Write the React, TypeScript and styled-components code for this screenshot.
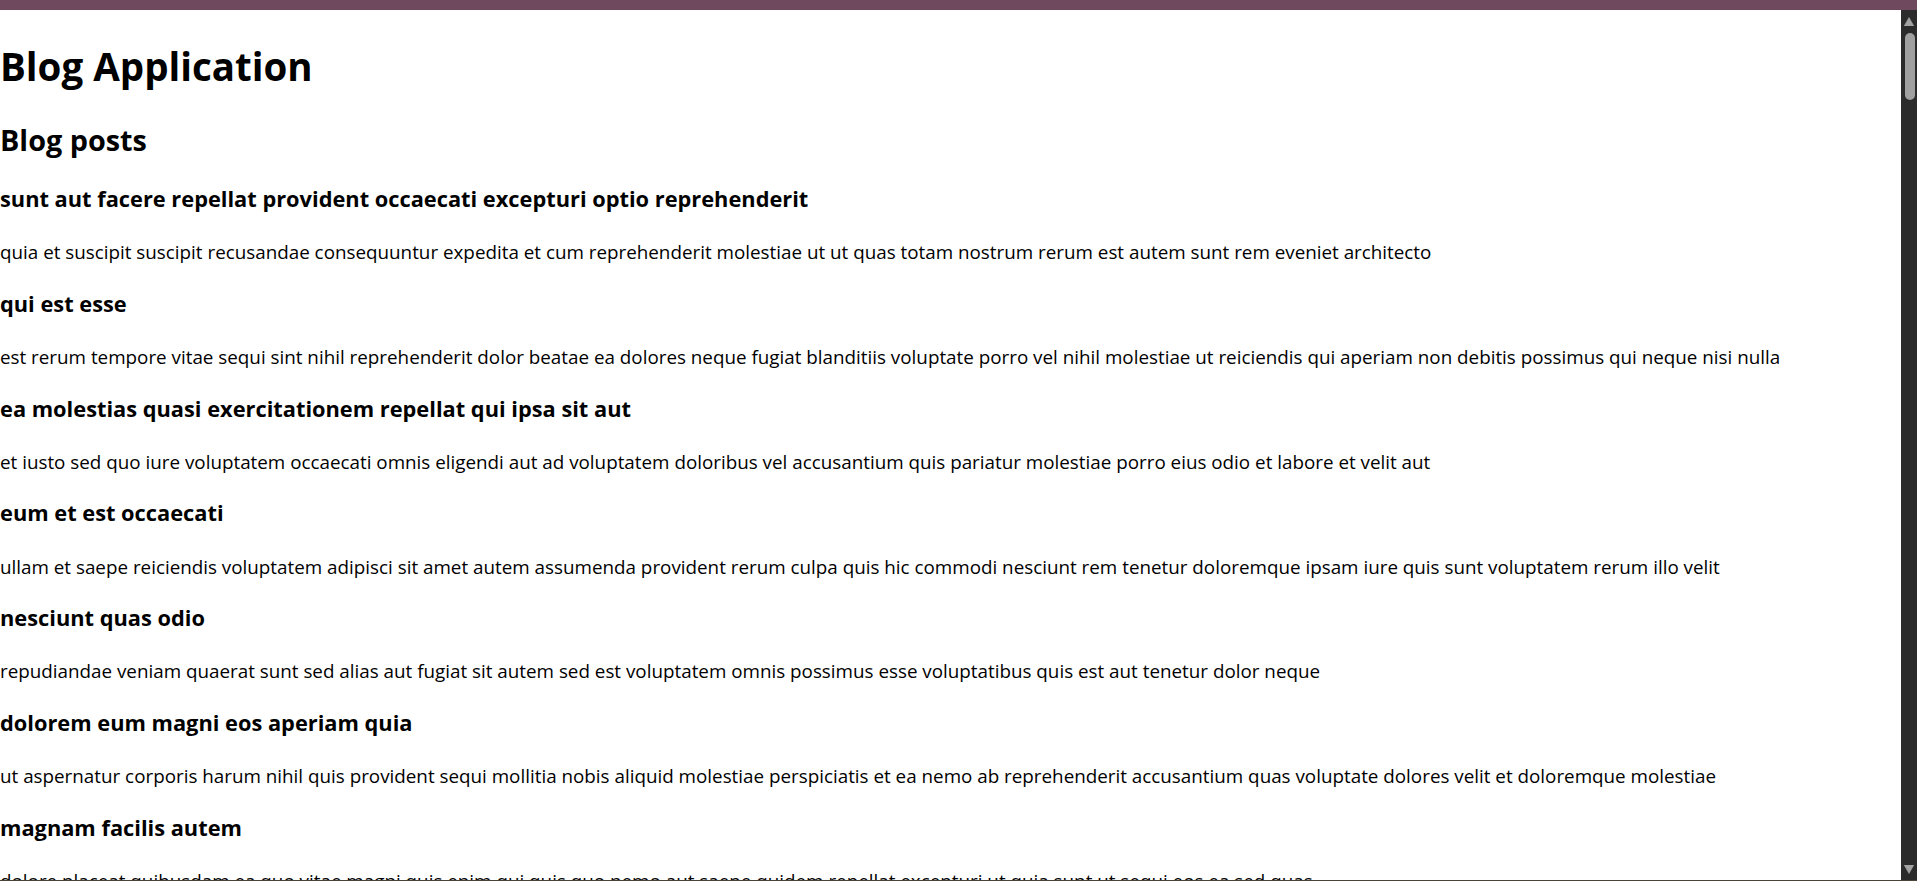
import React from "react";
import styled, { createGlobalStyle } from "styled-components";

const GlobalStyle = createGlobalStyle`
  html, body {
    margin: 0;
    padding: 0;
    height: 100%;
    overflow: hidden;
    background: #ffffff;
  }
  #root {
    height: 100%;
  }
`;

type Post = { id: number; title: string; body: string };

const KNOWN: [string, string][] = [
  ["sunt aut facere repellat provident occaecati excepturi optio reprehenderit", "quia et suscipit suscipit recusandae consequuntur expedita et cum reprehenderit molestiae ut ut quas totam nostrum rerum est autem sunt rem eveniet architecto"],
  ["qui est esse", "est rerum tempore vitae sequi sint nihil reprehenderit dolor beatae ea dolores neque fugiat blanditiis voluptate porro vel nihil molestiae ut reiciendis qui aperiam non debitis possimus qui neque nisi nulla"],
  ["ea molestias quasi exercitationem repellat qui ipsa sit aut", "et iusto sed quo iure voluptatem occaecati omnis eligendi aut ad voluptatem doloribus vel accusantium quis pariatur molestiae porro eius odio et labore et velit aut"],
  ["eum et est occaecati", "ullam et saepe reiciendis voluptatem adipisci sit amet autem assumenda provident rerum culpa quis hic commodi nesciunt rem tenetur doloremque ipsam iure quis sunt voluptatem rerum illo velit"],
  ["nesciunt quas odio", "repudiandae veniam quaerat sunt sed alias aut fugiat sit autem sed est voluptatem omnis possimus esse voluptatibus quis est aut tenetur dolor neque"],
  ["dolorem eum magni eos aperiam quia", "ut aspernatur corporis harum nihil quis provident sequi mollitia nobis aliquid molestiae perspiciatis et ea nemo ab reprehenderit accusantium quas voluptate dolores velit et doloremque molestiae"],
  ["magnam facilis autem", "dolore placeat quibusdam ea quo vitae magni quis enim qui quis quo nemo aut saepe quidem repellat excepturi ut quia sunt ut sequi eos ea sed quas"],
  ["dolorem dolore est ipsam", "dignissimos aperiam dolorem qui eum facilis quibusdam animi sint suscipit qui sint possimus cum quaerat magni maiores excepturi ipsam ut commodi dolor voluptatum modi aut vitae"],
  ["nesciunt iure omnis dolorem tempora et accusantium", "consectetur animi nesciunt iure dolore enim quia ad veniam autem ut quam aut nobis et est aut quod aut provident voluptas autem voluptas"],
  ["optio molestias id quia eum", "quo et expedita modi cum officia vel magni doloribus qui repudiandae vero nisi sit quos veniam quod sed accusamus veritatis error"],
  ["et ea vero quia laudantium autem", "delectus reiciendis molestiae occaecati non minima eveniet qui voluptatibus accusamus in eum beatae sit vel qui neque voluptates ut commodi qui incidunt ut animi commodi"],
  ["in quibusdam tempore odit est dolorem", "itaque id aut magnam praesentium quia et ea odit et ea voluptas et sapiente quia nihil amet occaecati quia id voluptatem incidunt ea est distinctio odio"],
  ["dolorum ut in voluptas mollitia et saepe quo animi", "aut dicta possimus sint mollitia voluptas commodi quo doloremque iste corrupti reiciendis voluptatem eius rerum sit cumque quod eligendi laborum minima perferendis recusandae assumenda consectetur porro architecto ipsum ipsam"],
  ["voluptatem eligendi optio", "fuga et accusamus dolorum perferendis illo voluptas non doloremque neque facere ad qui dolorum molestiae beatae sed aut voluptas totam sit illum"],
  ["eveniet quod temporibus", "reprehenderit quos placeat velit minima officia dolores impedit repudiandae molestiae nam voluptas recusandae quis delectus officiis harum fugiat vitae"],
  ["sint suscipit perspiciatis velit dolorum rerum ipsa laboriosam odio", "suscipit nam nisi quo aperiam aut asperiores eos fugit maiores voluptatibus quia voluptatem quis ullam qui in alias quia est consequatur magni mollitia accusamus ea nisi voluptate dicta"],
  ["fugit voluptas sed molestias voluptatem provident", "eos voluptas et aut odit natus earum aspernatur fuga molestiae ullam deserunt ratione qui eos qui nihil ratione nemo velit ut aut id quo"],
  ["voluptate et itaque vero tempora molestiae", "eveniet quo quis laborum totam consequatur non dolor ut et est repudiandae est voluptatem vel debitis et magnam"],
  ["adipisci placeat illum aut reiciendis qui", "illum quis cupiditate provident sit magnam ea sed aut omnis veniam maiores ullam consequatur atque adipisci quo iste expedita sit quos voluptas"],
  ["doloribus ad provident suscipit at", "qui consequuntur ducimus possimus quisquam amet similique suscipit porro ipsam amet eos veritatis officiis exercitationem vel fugit aut necessitatibus totam omnis rerum consequatur expedita quidem cumque explicabo"],
  ["asperiores ea ipsam voluptatibus modi minima quia sint", "repellat aliquid praesentium dolorem quo sed totam minus non itaque nihil labore molestiae sunt dolor eveniet hic recusandae veniam tempora et tenetur expedita sunt"],
  ["dolor sint quo a velit explicabo quia nam", "eos qui et ipsum ipsam suscipit aut sed omnis non odio expedita earum mollitia molestiae aut atque rem suscipit nam impedit esse"],
  ["maxime id vitae nihil numquam", "veritatis unde neque eligendi quae quod architecto quo neque vitae est illo sit tempora doloremque fugit quod et et vel beatae sequi ullam sed tenetur perspiciatis"],
  ["autem hic labore sunt dolores incidunt", "enim et ex nulla omnis voluptas quia qui voluptatem consequatur numquam aliquam sunt totam recusandae id dignissimos aut sed asperiores deserunt"],
  ["rem alias distinctio quo quis", "ullam consequatur ut omnis quis sit vel consequuntur ipsa eligendi ipsum molestiae et omnis error nostrum molestiae illo tempore quia et distinctio"],
  ["est et quae odit qui non", "similique esse doloribus nihil accusamus omnis dolorem fuga consequuntur reprehenderit fugit recusandae temporibus perspiciatis cum ut laudantium omnis aut molestiae vel vero"],
  ["quasi id et eos tenetur aut quo autem", "eum sed dolores ipsam sint possimus debitis occaecati debitis qui qui facere quia laudantium sapiente et repudiandae dolores numquam quos"],
  ["delectus ullam et corporis nulla voluptas sequi", "non et quaerat ex quae ad maiores maiores recusandae totam aut blanditiis mollitia quas illo ut omnis ex provident modi numquam quasi similique quae blanditiis"],
  ["iusto eius quod necessitatibus culpa ea", "odit magnam ut saepe sed non qui tempora atque nihil accusamus illum doloribus illo dolor eligendi repudiandae odit magni similique sed cum maiores"],
  ["a quo magni similique perferendis", "alias dolor cumque impedit blanditiis non eveniet odio maxime blanditiis amet eius quis tempora quia autem rem a provident perspiciatis quia"],
  ["ullam ut quidem id aut vel consequuntur", "debitis eius sed quibusdam non quis consectetur vitae impedit ut qui consequatur sed aut in quidem sit nostrum et maiores adipisci atque quaerat voluptatem adipisci repudiandae"],
  ["doloremque illum aliquid sunt", "deserunt eos nobis asperiores et hic est debitis repellat molestiae optio nihil ratione ut eos beatae quibusdam distinctio maiores earum voluptates et aut adipisci ea maiores voluptas maxime"],
  ["qui explicabo molestiae dolorem", "rerum ut et numquam laborum odit est sit id qui sint in quasi tenetur tempore aperiam et quaerat qui in rerum officiis sequi cumque quod"],
  ["magnam ut rerum iure", "ea velit perferendis earum ut voluptatem voluptate itaque iusto totam pariatur in nemo voluptatem voluptatem autem magni tempora minima in est distinctio qui assumenda accusamus dignissimos officia nesciunt nobis"],
  ["id nihil consequatur molestias animi provident", "nisi error delectus possimus ut eligendi vitae placeat eos harum cupiditate facilis reprehenderit voluptatem beatae modi ducimus quo illum voluptas eligendi et nobis quia fugit"],
  ["fuga nam accusamus voluptas reiciendis itaque", "ad mollitia et omnis minus architecto odit voluptas doloremque dicta ratione velit quam impedit minima eum libero ipsa officiis possimus quasi excepturi quibusdam nesciunt fuga"],
];

const WORDS =
  "et aut qui sit est ut quia voluptatem dolor rerum eos nemo quis magni odit sed non ipsam omnis veniam enim autem dolores fugiat porro nihil culpa iure molestiae facere repellat provident sunt neque eius quasi eveniet error tempora modi animi totam atque quo soluta ratione minima nulla beatae cumque".split(
    " "
  );

function makeText(seed: number, count: number): string {
  const out: string[] = [];
  let s = seed * 9301 + 49297;
  for (let i = 0; i < count; i++) {
    s = (s * 9301 + 49297) % 233280;
    out.push(WORDS[s % WORDS.length]);
  }
  return out.join(" ");
}

const POSTS: Post[] = Array.from({ length: 100 }, (_, i) => {
  const known = KNOWN[i];
  if (known) return { id: i + 1, title: known[0], body: known[1] };
  return {
    id: i + 1,
    title: makeText(i * 7 + 3, 3 + (i % 6)),
    body: makeText(i * 13 + 11, 22 + (i % 9)),
  };
});

/* ---------- window frame ---------- */

const Frame = styled.div`
  height: 100%;
  display: flex;
  flex-direction: column;
  background: #ffffff;
`;

const WindowBar = styled.div`
  flex: 0 0 10px;
  background: #6f4a5e;
`;

const WindowEdge = styled.div`
  flex: 0 0 1px;
  background: #4b4539;
`;

const Viewport = styled.div`
  flex: 1 1 auto;
  min-height: 0;
  display: flex;
  flex-direction: row;
`;

/* ---------- page content ---------- */

const Content = styled.main`
  flex: 1 1 auto;
  min-width: 0;
  overflow: hidden;
  color: #000000;
  font-family: "Open Sans", "Noto Sans", sans-serif;
`;

const Title = styled.h1`
  margin: 29.5px 0 26.8px;
  font-size: 38.5px;
  line-height: 53.2px;
  font-weight: 700;
`;

const SectionTitle = styled.h2`
  margin: 24.9px 0 23.4px;
  font-size: 28.8px;
  line-height: 39.9px;
  font-weight: 700;
`;

const PostList = styled.section`
  display: block;
`;

const PostItem = styled.article`
  display: block;
`;

const PostTitle = styled.h3`
  margin: 22.2px 0 25px;
  font-size: 21.8px;
  line-height: 31.1px;
  font-weight: 700;
`;

const PostBody = styled.p`
  margin: 20px 0;
  font-size: 18.82px;
  line-height: 26.6px;
  font-weight: 400;
`;

/* ---------- scrollbar drawing ---------- */

const ScrollRail = styled.div`
  flex: 0 0 16px;
  display: flex;
  flex-direction: column;
  background: #2b2b2b;
`;

const ArrowButton = styled.div<{ $dir: "up" | "down" }>`
  flex: 0 0 23px;
  display: flex;
  justify-content: center;
  align-items: flex-start;
  padding-top: ${(p) => (p.$dir === "up" ? "7px" : "8px")};
  box-sizing: border-box;
  svg {
    display: block;
  }
`;

const Track = styled.div`
  flex: 1 1 auto;
  display: flex;
  flex-direction: column;
  padding: 0 2px 0 4px;
`;

const Thumb = styled.div`
  flex: 0 0 67px;
  border-radius: 5px;
  background: #a0a0a0;
`;

function Arrow({ dir }: { dir: "up" | "down" }) {
  const d = dir === "up" ? "M5 0.5 L9.8 9 L0.2 9 Z" : "M0.2 0 L9.8 0 L5 8.5 Z";
  return (
    <ArrowButton $dir={dir}>
      <svg width="10" height="9" viewBox="0 0 10 9" aria-hidden="true">
        <path d={d} fill="#a3a3a3" stroke="#a3a3a3" strokeWidth="0.6" strokeLinejoin="round" />
      </svg>
    </ArrowButton>
  );
}

export default function App() {
  return (
    <>
      <GlobalStyle />
      <Frame>
        <WindowBar />
        <Viewport>
          <Content>
            <Title>Blog Application</Title>
            <SectionTitle>Blog posts</SectionTitle>
            <PostList>
              {POSTS.map((post) => (
                <PostItem key={post.id}>
                  <PostTitle>{post.title}</PostTitle>
                  <PostBody>{post.body}</PostBody>
                </PostItem>
              ))}
            </PostList>
          </Content>
          <ScrollRail>
            <Arrow dir="up" />
            <Track>
              <Thumb />
            </Track>
            <Arrow dir="down" />
          </ScrollRail>
        </Viewport>
        <WindowEdge />
      </Frame>
    </>
  );
}
